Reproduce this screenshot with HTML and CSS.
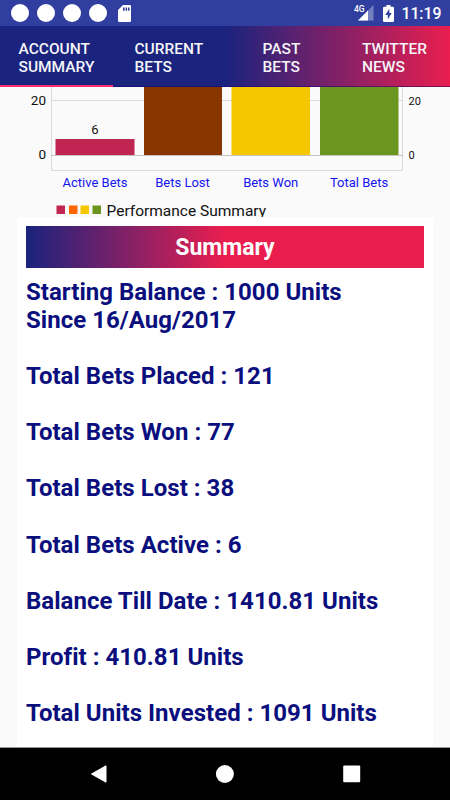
FILE: index.html
```
<!DOCTYPE html>
<html lang="en">
<head>
  <meta charset="UTF-8" />
  <title>Account Summary</title>
  <link rel="stylesheet" href="styles.css">
</head>
<body>
  <div class="status-bar">
    <div class="notifications">
      <span class="dot"></span>
      <span class="dot"></span>
      <span class="dot"></span>
      <span class="dot"></span>
      <svg class="sd-card" width="13" height="17" viewBox="0 0 13 17">
        <path fill="#fff" fill-rule="evenodd" d="M5 0h6.800q1.200 0 1.200 1.200v14.600q0 1.200-1.200 1.200H1.200Q0 17 0 15.800V5zM5 2.500v3.300h1.600V2.500zM7.600 2.500v3.300h1.500V2.500zM10 2.500v3.300h1.500V2.500z"/>
      </svg>
    </div>
    <div class="system">
      <svg width="20" height="18" viewBox="0 0 20 18">
        <path fill="#7580c0" d="M19.500 1v15.500H4z"/>
        <path fill="#fff" d="M14 6.500v10H4z"/>
        <text class="network" x="0" y="8">4G</text>
      </svg>
      <svg class="battery" width="11" height="17" viewBox="0 0 11 17">
        <path fill="#fff" d="M3.500 0h4v1.700h2.300q1.200 0 1.200 1.200v12.900q0 1.200-1.200 1.200H1.200Q0 17 0 15.800V2.900q0-1.200 1.200-1.200h2.300z"/>
        <path fill="#303f9f" d="M6.300 3.800L2.300 10h2.500v4.500L8.700 8H6.300z"/>
      </svg>
      <span class="clock">11:19</span>
    </div>
  </div>

  <nav class="tabs">
    <a class="tab active">ACCOUNT<br>SUMMARY</a>
    <a class="tab current">CURRENT<br>BETS</a>
    <a class="tab past">PAST<br>BETS</a>
    <a class="tab news">TWITTER<br>NEWS</a>
  </nav>

  <main>
    <svg class="chart" width="450" height="130" viewBox="0 87 450 130">
      <path class="grid" d="M51 100.500H403M51 170.500H403M51.500 87V170M402.500 87V170"/>
      <path class="zero" d="M51 155.500H403"/>
      <rect x="55.500" y="139" width="79" height="16" fill="#c12552"/>
      <rect x="144" y="87" width="78" height="68" fill="#883500"/>
      <rect x="231.500" y="87" width="78.500" height="68" fill="#f5c700"/>
      <rect x="320" y="87" width="78.500" height="68" fill="#6a961f"/>
      <g class="axis-left">
        <text x="46" y="105">20</text>
        <text x="46" y="159">0</text>
      </g>
      <g class="axis-right">
        <text x="408.500" y="104.500">20</text>
        <text x="408.500" y="158.500">0</text>
      </g>
      <text class="value" x="95" y="134">6</text>
      <g class="labels">
        <text x="95" y="186.500">Active Bets</text>
        <text x="182.500" y="186.500">Bets Lost</text>
        <text x="270.700" y="186.500">Bets Won</text>
        <text x="359" y="186.500">Total Bets</text>
      </g>
      <rect x="56.500" y="205.500" width="8.500" height="8.500" fill="#c12552"/>
      <rect x="69" y="205.500" width="8.500" height="8.500" fill="#ff6600"/>
      <rect x="80.500" y="205.500" width="8.500" height="8.500" fill="#f5c700"/>
      <rect x="92.500" y="205.500" width="8.500" height="8.500" fill="#6a961f"/>
      <text class="legend" x="106.500" y="215.500">Performance Summary</text>
    </svg>

    <section class="card">
      <h2>Summary</h2>
      <p>Starting Balance : 1000 Units<br>Since 16/Aug/2017</p>
      <p>Total Bets Placed : 121</p>
      <p>Total Bets Won : 77</p>
      <p>Total Bets Lost : 38</p>
      <p>Total Bets Active : 6</p>
      <p>Balance Till Date : 1410.81 Units</p>
      <p>Profit : 410.81 Units</p>
      <p>Total Units Invested : 1091 Units</p>
    </section>
  </main>

  <footer class="nav-bar">
    <svg width="450" height="52" viewBox="0 0 450 52">
      <path fill="#fff" stroke="#fff" stroke-linejoin="round" d="M91.500 26L106 17.800v16.400z"/>
      <circle cx="224.900" cy="26" r="9" fill="#fff"/>
      <rect x="343.200" y="17.500" width="17" height="16.800" rx="1" fill="#fff"/>
    </svg>
  </footer>
</body>
</html>
```
FILE: styles.css
```
body {
  font-family: Roboto, sans-serif;
  background: #fafafa;
  margin: 0;
  height: 800px;
  display: flex;
  flex-direction: column;
  overflow: hidden;
}
svg {
  display: block;
}
.status-bar {
  height: 26px;
  flex: none;
  box-sizing: border-box;
  background: #303f9f;
  color: #fff;
  display: flex;
  justify-content: space-between;
  align-items: center;
  padding: 0 8.500px 0 10.500px;
}
.notifications {
  display: flex;
  align-items: center;
  gap: 8.300px;
}
.dot {
  width: 18px;
  height: 18px;
  border-radius: 50%;
  background: #fff;
}
.sd-card {
  margin-left: 2px;
}
.system {
  display: flex;
  align-items: center;
}
.system svg {
  overflow: visible;
}
.network {
  font-size: 8.500px;
  font-weight: 500;
  fill: #fff;
}
.battery {
  margin: 0 7px 0 9px;
}
.clock {
  font-size: 15.800px;
  font-weight: 500;
  line-height: 26px;
  padding-top: 2px;
}
.tabs {
  height: 61px;
  flex: none;
  display: flex;
  background: linear-gradient(to right, #1a237e 50%, #e91e4f);
  box-shadow: inset 0 -1px rgba(20, 0, 110, 0.5);
}
.tab {
  box-sizing: border-box;
  flex: none;
  padding: 14px 0 0 18.500px;
  width: 113px;
  font-size: 15.500px;
  font-weight: 500;
  line-height: 18px;
  color: #f5f5f8;
}
.tab.active {
  border-bottom: 2px solid #ff2d78;
}
.tab.current {
  padding-left: 21.500px;
}
.tab.past {
  padding-left: 36.500px;
}
.tab.news {
  width: 111px;
  padding-left: 23px;
}
main {
  flex: 1;
  min-height: 0;
  overflow: hidden;
}
.grid {
  stroke: #dadada;
}
.zero {
  stroke: #c4c4c4;
}
.chart text {
  font-size: 13px;
  fill: #111;
}
.chart .axis-left text {
  font-size: 13.500px;
  text-anchor: end;
}
.chart .axis-right text {
  font-size: 11px;
}
.chart .value {
  text-anchor: middle;
}
.chart .labels text {
  fill: #1414f0;
  text-anchor: middle;
}
.chart .legend {
  font-size: 15.500px;
}
.card {
  background: #fff;
  margin: 0 17px;
  padding: 9px 9px 0;
  height: 530px;
  box-sizing: border-box;
  color: #0a0f7d;
}
h2 {
  margin: 0 0 9.500px;
  height: 42px;
  line-height: 44px;
  font-size: 23px;
  font-weight: 700;
  text-align: center;
  color: #fff;
  background: linear-gradient(to right, #1a237e, #e91e4f 50%);
}
.card p {
  margin: 0 0 28.125px;
  font-size: 24px;
  font-weight: 700;
  line-height: 28.125px;
  letter-spacing: 0.030px;
  white-space: nowrap;
}
.nav-bar {
  height: 53px;
  flex: none;
  box-sizing: border-box;
  background: #000;
  border-top: 1px solid #8f9494;
}
```
